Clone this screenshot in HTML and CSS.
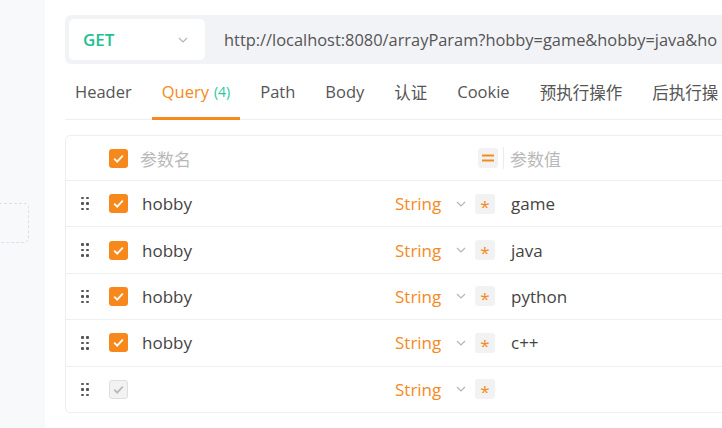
FILE: index.html
```html
<!DOCTYPE html>
<html>
<head>
    <meta charset="UTF-8">
    <meta name="viewport" content="width=device-width, initial-scale=1.0">
    <title>Query</title>
    <link rel="stylesheet" href="styles.css">
</head>
<body>
    <div class="page">
        <div class="sidebar">
            <div class="drop-box"></div>
        </div>
        <div class="main">
            <div class="url-bar">
                <div class="method">
                    <span class="method-name">GET</span>
                    <svg class="chev" width="10" height="6" viewBox="0 0 10 6"><path d="M1 1l4 4 4-4" fill="none" stroke="#b5b5b5" stroke-width="1.2"/></svg>
                </div>
                <div class="url">http://localhost:8080/arrayParam?hobby=game&amp;hobby=java&amp;ho</div>
            </div>

            <div class="tabs">
                <span class="tab">Header</span>
                <span class="tab active">Query <span class="count">(4)</span></span>
                <span class="tab">Path</span>
                <span class="tab">Body</span>
                <span class="tab">认证</span>
                <span class="tab">Cookie</span>
                <span class="tab">预执行操作</span>
                <span class="tab">后执行操</span>
            </div>

            <div class="table">
                <div class="row head-row">
                    <span class="handle-cell"></span>
                    <span class="check"><svg width="11" height="9" viewBox="0 0 11 9"><path d="M1.2 4.6l3 3 5.6-6" fill="none" stroke="#fff" stroke-width="1.8"/></svg></span>
                    <span class="name placeholder">参数名</span>
                    <span class="eq-box">
                        <svg width="12" height="8" viewBox="0 0 12 8"><path d="M0 1.5h12M0 6.5h12" stroke="#f78a1d" stroke-width="1.8"/></svg>
                    </span>
                    <span class="sep"></span>
                    <span class="value placeholder">参数值</span>
                </div>

                <div class="row">
                    <span class="handle-cell"><span class="handle"><i></i><i></i><i></i><i></i><i></i><i></i></span></span>
                    <span class="check"><svg width="11" height="9" viewBox="0 0 11 9"><path d="M1.2 4.6l3 3 5.6-6" fill="none" stroke="#fff" stroke-width="1.8"/></svg></span>
                    <span class="name">hobby</span>
                    <span class="type">String</span>
                    <svg class="type-chev" width="10" height="6" viewBox="0 0 10 6"><path d="M1 1l4 4 4-4" fill="none" stroke="#b5b5b5" stroke-width="1.2"/></svg>
                    <span class="star-box">*</span>
                    <span class="value">game</span>
                </div>

                <div class="row">
                    <span class="handle-cell"><span class="handle"><i></i><i></i><i></i><i></i><i></i><i></i></span></span>
                    <span class="check"><svg width="11" height="9" viewBox="0 0 11 9"><path d="M1.2 4.6l3 3 5.6-6" fill="none" stroke="#fff" stroke-width="1.8"/></svg></span>
                    <span class="name">hobby</span>
                    <span class="type">String</span>
                    <svg class="type-chev" width="10" height="6" viewBox="0 0 10 6"><path d="M1 1l4 4 4-4" fill="none" stroke="#b5b5b5" stroke-width="1.2"/></svg>
                    <span class="star-box">*</span>
                    <span class="value">java</span>
                </div>

                <div class="row">
                    <span class="handle-cell"><span class="handle"><i></i><i></i><i></i><i></i><i></i><i></i></span></span>
                    <span class="check"><svg width="11" height="9" viewBox="0 0 11 9"><path d="M1.2 4.6l3 3 5.6-6" fill="none" stroke="#fff" stroke-width="1.8"/></svg></span>
                    <span class="name">hobby</span>
                    <span class="type">String</span>
                    <svg class="type-chev" width="10" height="6" viewBox="0 0 10 6"><path d="M1 1l4 4 4-4" fill="none" stroke="#b5b5b5" stroke-width="1.2"/></svg>
                    <span class="star-box">*</span>
                    <span class="value">python</span>
                </div>

                <div class="row">
                    <span class="handle-cell"><span class="handle"><i></i><i></i><i></i><i></i><i></i><i></i></span></span>
                    <span class="check"><svg width="11" height="9" viewBox="0 0 11 9"><path d="M1.2 4.6l3 3 5.6-6" fill="none" stroke="#fff" stroke-width="1.8"/></svg></span>
                    <span class="name">hobby</span>
                    <span class="type">String</span>
                    <svg class="type-chev" width="10" height="6" viewBox="0 0 10 6"><path d="M1 1l4 4 4-4" fill="none" stroke="#b5b5b5" stroke-width="1.2"/></svg>
                    <span class="star-box">*</span>
                    <span class="value">c++</span>
                </div>

                <div class="row">
                    <span class="handle-cell"><span class="handle"><i></i><i></i><i></i><i></i><i></i><i></i></span></span>
                    <span class="check off"><svg width="11" height="9" viewBox="0 0 11 9"><path d="M1.2 4.6l3 3 5.6-6" fill="none" stroke="#b8b8b8" stroke-width="1.8"/></svg></span>
                    <span class="name"></span>
                    <span class="type">String</span>
                    <svg class="type-chev" width="10" height="6" viewBox="0 0 10 6"><path d="M1 1l4 4 4-4" fill="none" stroke="#b5b5b5" stroke-width="1.2"/></svg>
                    <span class="star-box">*</span>
                    <span class="value"></span>
                </div>
            </div>
        </div>
    </div>
</body>
</html>
```

FILE: styles.css
```css
* {
    padding: 0;
    margin: 0;
    box-sizing: border-box;
}
body {
    width: 722px;
    height: 428px;
    overflow: hidden;
    background: #fff;
    font-family: "Open Sans", "Noto Sans CJK SC", sans-serif;
    color: #444;
}
.page {
    display: flex;
    height: 428px;
}
.sidebar {
    width: 45px;
    flex-shrink: 0;
    background: #f8f9fb;
    padding-top: 203px;
}
.drop-box {
    width: 40px;
    height: 40px;
    margin-left: -11px;
    border: 1px dashed #dcdfe4;
    border-radius: 5px;
}
.main {
    width: 677px;
    flex-shrink: 0;
    padding: 15px 0 0 20px;
    overflow: hidden;
}
.url-bar {
    display: flex;
    align-items: center;
    width: 700px;
    height: 49px;
    padding: 4px;
    background: #f2f3f6;
    border-radius: 6px;
}
.method {
    display: flex;
    align-items: center;
    justify-content: space-between;
    width: 136px;
    height: 41px;
    flex-shrink: 0;
    padding: 0 17px 0 14px;
    background: #fff;
    border-radius: 5px;
}
.method-name {
    color: #1dc193;
    font-weight: 600;
    font-size: 17px;
}
.url {
    margin-left: 19px;
    font-size: 16.4px;
    color: #555;
    white-space: nowrap;
}
.tabs {
    display: flex;
    gap: 10px;
    width: 700px;
    height: 56px;
    border-bottom: 1px solid #eeeeee;
}
.tab {
    position: relative;
    display: flex;
    align-items: center;
    padding: 0 10px;
    font-size: 16.5px;
    color: #555;
    white-space: nowrap;
}
.tab.active {
    color: #f7891c;
}
.tab.active::after {
    content: "";
    position: absolute;
    left: 0;
    right: 0;
    bottom: -1px;
    height: 3px;
    background: #f7891c;
}
.count {
    margin-left: 5px;
    font-size: 14px;
    color: #2bc6a0;
}
.table {
    width: 700px;
    margin-top: 15px;
    border: 1px solid #eeeeee;
    border-radius: 5px;
}
.row {
    display: flex;
    align-items: center;
    height: 46.4px;
    border-top: 1px solid #efefef;
    font-size: 17px;
}
.head-row {
    height: 44px;
    border-top: none;
}
.handle-cell {
    width: 43px;
    padding-left: 15px;
    flex-shrink: 0;
}
.handle {
    display: grid;
    grid-template-columns: 2px 2px;
    gap: 3px 3px;
    width: 8px;
}
.handle i {
    width: 2.5px;
    height: 2.5px;
    background: #555;
    border-radius: 1px;
}
.check {
    display: flex;
    align-items: center;
    justify-content: center;
    width: 19px;
    height: 19px;
    flex-shrink: 0;
    background: #f7891c;
    border-radius: 3px;
}
.check.off {
    background: #f2f2f2;
    border: 1px solid #dedede;
}
.name {
    width: 267px;
    padding-left: 14px;
    flex-shrink: 0;
    color: #444;
}
.head-row .name {
    padding-left: 12px;
}
.type {
    width: 61px;
    flex-shrink: 0;
    color: #f7891c;
}
.type-chev {
    flex-shrink: 0;
}
.star-box {
    display: flex;
    justify-content: center;
    align-items: flex-start;
    width: 20px;
    height: 20px;
    margin-left: 9px;
    padding-top: 3px;
    flex-shrink: 0;
    background: #f2f2f3;
    border-radius: 3px;
    color: #f7891c;
    font-size: 17px;
    line-height: 20px;
}
.value {
    margin-left: 16px;
    color: #444;
}
.eq-box {
    display: flex;
    align-items: center;
    justify-content: center;
    width: 20px;
    height: 20px;
    margin-left: 83px;
    flex-shrink: 0;
    background: #f2f2f3;
    border-radius: 3px;
}
.sep {
    width: 1px;
    height: 22px;
    margin-left: 5px;
    background: #ececec;
}
.head-row .value {
    margin-left: 6px;
}
.row .placeholder {
    color: #b9b9b9;
}
```
